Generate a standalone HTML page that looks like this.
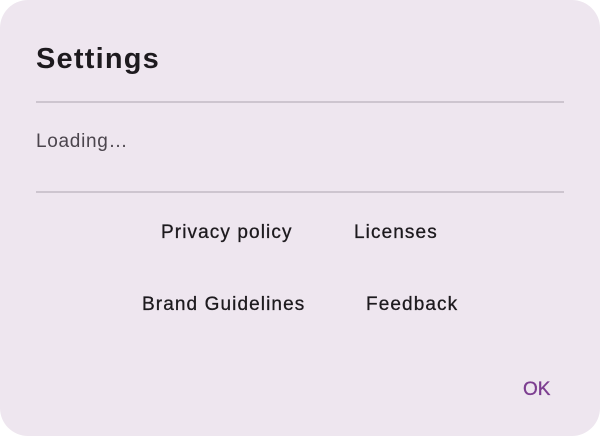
<!DOCTYPE html>
<html><head><style>
html,body{margin:0;padding:0;width:600px;height:436px;background:#fff;overflow:hidden}
.d{position:absolute;left:0;top:0;width:600px;height:436px;background:#eee6ef;border-radius:28px;font-family:"Liberation Sans",Roboto,sans-serif}
.t{position:absolute;left:36px;top:43px;font-size:29px;font-weight:bold;color:#1d1a1e;letter-spacing:1.2px}
.hr{position:absolute;left:36px;width:528px;height:2px;background:#cdc5cf}
.l{position:absolute;left:36px;top:131px;font-size:19px;color:#4b454d;letter-spacing:0.7px}
.a{position:absolute;font-size:19px;color:#1d1a1e;font-weight:500;-webkit-text-stroke:0.3px #1d1a1e;letter-spacing:1.1px}
.ok{position:absolute;left:523px;top:379px;font-size:19px;color:#7c3d90;-webkit-text-stroke:0.3px #7c3d90}
</style></head><body><div class="d">
<div class="t">Settings</div>
<div class="hr" style="top:101px"></div>
<div class="l">Loading…</div>
<div class="hr" style="top:191px"></div>
<div class="a" style="left:161px;top:222px">Privacy policy</div>
<div class="a" style="left:354px;top:222px">Licenses</div>
<div class="a" style="left:142px;top:294px">Brand Guidelines</div>
<div class="a" style="left:366px;top:294px">Feedback</div>
<div class="ok">OK</div>
</div></body></html>
